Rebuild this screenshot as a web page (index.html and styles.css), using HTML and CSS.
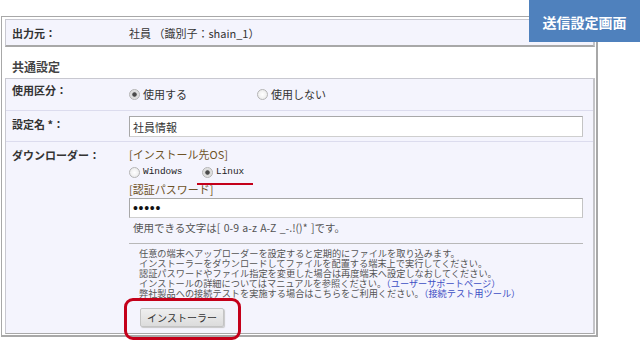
FILE: index.html
```html
<!DOCTYPE html>
<html lang="ja">
<head>
  <meta charset="UTF-8">
  <meta name="viewport" content="width=device-width, initial-scale=1.0">
  <title>送信設定画面</title>
  <link rel="stylesheet" href="styles.css">
</head>
<body>
  <div class="page">
    <div class="badge">送信設定画面</div>

    <div class="panel">
      <div class="box box-source">
        <div class="row">
          <div class="label">出力元：</div>
          <div class="value">社員 （識別子：shain_1）</div>
        </div>
      </div>

      <h2 class="heading">共通設定</h2>

      <div class="box">
        <div class="row row-use">
          <div class="label">使用区分：</div>
          <div class="value">
            <span class="radio on opt-use">使用する</span><span class="radio">使用しない</span>
          </div>
        </div>

        <div class="row row-name">
          <div class="label">設定名 *：</div>
          <div class="value">
            <input class="field field-name" type="text" value="社員情報">
          </div>
        </div>

        <div class="row row-dl">
          <div class="label">ダウンローダー：</div>
          <div class="value">
            <div class="caption">[インストール先OS]</div>
            <div class="os-list">
              <span class="radio opt-win">Windows</span><span class="radio on">Linux</span>
            </div>
            <div class="caption caption-pw">[認証パスワード]</div>
            <input class="field field-pw" type="text" value="•••••">
            <div class="hint">使用できる文字は[ 0-9 a-z A-Z _-.!()* ]です。</div>
            <hr class="divider">
            <div class="help">
              <p>任意の端末へアップローダーを設定すると定期的にファイルを取り込みます。</p>
              <p>インストーラーをダウンロードしてファイルを配置する端末上で実行してください。</p>
              <p>認証パスワードやファイル指定を変更した場合は再度端末へ設定しなおしてください。</p>
              <p>インストールの詳細についてはマニュアルを参照ください。<a href="#">（ユーザーサポートページ）</a></p>
              <p>弊社製品への接続テストを実施する場合はこちらをご利用ください。<a href="#">（接続テスト用ツール）</a></p>
              <button class="btn" type="button">インストーラー</button>
            </div>
          </div>
        </div>
      </div>
    </div>

    <!-- red annotations drawn over the form -->
    <div class="mark mark-linux"></div>
    <div class="mark mark-button"></div>
  </div>
</body>
</html>
```

FILE: styles.css
```css
* { box-sizing: border-box; }
body { margin: 0; font-family: "Noto Sans CJK JP", "Noto Sans", sans-serif; font-size: 11px; color: #333; background: #fff; }
.page { position: relative; width: 640px; height: 343px; overflow: hidden; }

.badge {
  position: absolute; top: 0; right: 0;
  width: 111px; height: 42px; padding-top: 1px;
  background: #4f81bd; color: #fff;
  font-size: 14px; font-weight: bold; line-height: 42px; text-align: center;
}

.panel {
  width: 597px; margin: 16px 0 0 1px;
  border: 1px solid #a8a8a8; border-right-width: 2px; border-bottom-width: 2px;
  padding: 2px 1px 1px 3px;
}

.box {
  width: 590px; background: #f4f4fd;
  border: 1px solid #c8c8d0; border-right: 2px solid #c4c4c8; border-bottom: 1px solid #a8a8a8;
}
.box-source { border-bottom: 2px solid #a8a8a8; }
.box-source .row { height: 25px; }
.box-source .label, .box-source .value { padding-top: 6px; }

.heading { margin: 0; padding: 13px 0 4px 7px; font-size: 12px; line-height: 14px; color: #444; }

.row { display: grid; grid-template-columns: 123px 1fr; border-bottom: 1px solid #dcdcee; line-height: 14px; }
.row:last-child { border-bottom: 0; }
.label { padding: 6px 0 0 6px; font-weight: bold; }
.value { padding-right: 10px; }

.row-use { height: 32px; }
.row-use .label { padding-top: 4px; }
.row-use .value { padding-top: 8px; }
.row-name .value { padding: 5px 10px 4px 0; }
.row-dl .value { padding-top: 5px; padding-bottom: 6px; }

.radio { display: inline-flex; align-items: center; vertical-align: top; }
.radio::before {
  content: ""; width: 9px; height: 9px; margin-right: 3px; border-radius: 50%;
  border: 1px solid #b4b4b4; background: radial-gradient(circle, #fff 0, #e6e6e6 100%);
}
.radio.on::before { background: radial-gradient(circle, #4a4a4a 0 1.8px, #d8d8d8 2.6px, #f0f0f0 100%); }
.opt-use { width: 128px; }

.os-list { margin-top: 4px; font-family: "Liberation Mono", monospace; font-size: 9.4px; height: 14px; color: #222; }
.opt-win { width: 73px; }

.caption { color: #6e5226; }
.caption-pw { margin-top: 3px; }

.field {
  display: block; width: 454px; margin: 0; padding: 0 3px;
  border: 1px solid #a8a8a8; border-bottom-color: #cfcfcf; border-right-color: #c4c4c4;
  background: #fff; font-family: inherit; font-size: 11px; color: #333; outline: none;
}
.field-name { height: 21px; }
.field-pw { height: 20px; margin-top: 2px; font-family: "Liberation Sans", sans-serif; font-size: 14px; letter-spacing: 0.7px; color: #111; }

.hint { margin-top: 3px; padding-left: 4px; font-size: 10.5px; word-spacing: 1px; color: #555; }
.divider { width: 454px; margin: 8px 0 0; border: 0; border-top: 1px solid #b8b8b8; }

.help { margin: 4px 0 0 10px; font-size: 9.2px; line-height: 10px; color: #555; }
.help p { margin: 0; white-space: nowrap; }
.help a { color: #3d4fc4; text-decoration: none; }

.btn {
  display: block; width: 84px; height: 19px; margin: 10px 0 0 1px; padding: 0;
  border: 1px solid #c4c4c4; border-radius: 2px;
  background: linear-gradient(#efefef, #dcdcdc); box-shadow: 1px 1px 1px #c8c8c8;
  font-family: inherit; font-size: 10px; color: #333;
}

.mark { position: absolute; }
.mark-linux { left: 197px; top: 183px; width: 56px; height: 2px; background: #c4001a; }
.mark-button { left: 124px; top: 298px; width: 117px; height: 42px; border: 3px solid #c4001a; border-radius: 9px; }
```
